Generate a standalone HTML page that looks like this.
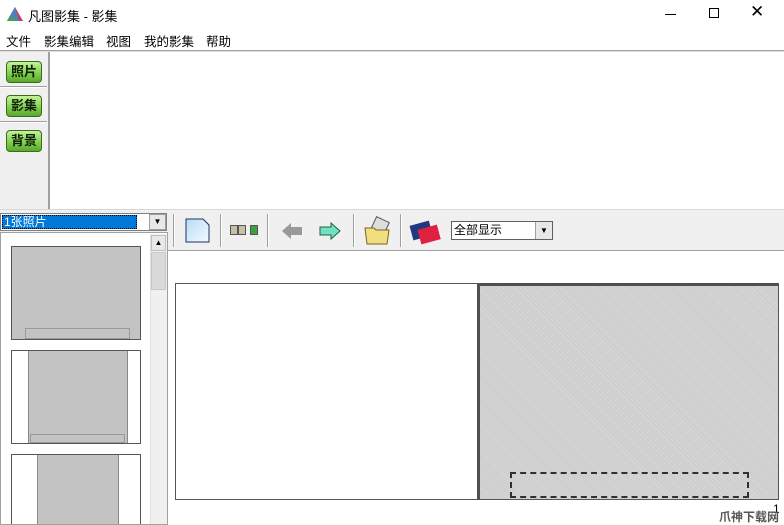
<!DOCTYPE html>
<html style="overflow:hidden;width:784px;height:525px"><head><meta charset="utf-8"><style>
*{margin:0;padding:0;box-sizing:border-box}
body{width:784px;height:525px;overflow:hidden;background:#fff;position:relative;font-family:"Liberation Sans","Noto Sans CJK SC",sans-serif;font-size:12px;color:#000}
.a{position:absolute}
.btn{position:absolute;left:6px;width:36px;height:22px;border:1px solid #3a6a1a;border-radius:4px;background:linear-gradient(#c4f49a,#7ccc4a 60%,#5aa82e);font-weight:bold;font-size:13px;text-align:center;line-height:20px;color:#102008}
.sep{position:absolute;top:214px;width:2px;height:33px;border-left:1px solid #a0a0a0;border-right:1px solid #fff}
.hatch{background-color:#dadada;background-image:repeating-linear-gradient(45deg,#c8c8c8 0 1px,transparent 1px 2px)}
</style></head><body>
<svg class="a" style="left:6px;top:6px" width="18" height="18" viewBox="0 0 18 18"><path d="M9 1 L17 15 L1 15Z" fill="#c04060"/><path d="M9 1 L13 15 L1 15Z" fill="#5080c0"/><path d="M4 10 L13 15 L1 15Z" fill="#40a060"/></svg>
<div class="a" style="left:28px;top:6px;font-size:13px">凡图影集 - 影集</div>
<div class="a" style="left:665px;top:14px;width:11px;height:1px;background:#000"></div>
<div class="a" style="left:709px;top:8px;width:10px;height:10px;border:1px solid #000"></div>
<div class="a" style="left:750px;top:2px;font-size:17px;font-weight:lighter">✕</div>
<div class="a" style="left:6px;top:31px;font-size:12.5px">文件</div>
<div class="a" style="left:44px;top:31px;font-size:12.5px">影集编辑</div>
<div class="a" style="left:106px;top:31px;font-size:12.5px">视图</div>
<div class="a" style="left:144px;top:31px;font-size:12.5px">我的影集</div>
<div class="a" style="left:206px;top:31px;font-size:12.5px">帮助</div>
<div class="a" style="left:0;top:50px;width:784px;height:2px;background:#a0a0a0;border-bottom:1px solid #e0e0e0"></div>
<div class="a" style="left:0;top:52px;width:50px;height:157px;background:#f0f0f0;border-right:2px solid #a0a0a0"></div>
<div class="a" style="left:0;top:86px;width:47px;height:2px;border-top:1px solid #a0a0a0;border-bottom:1px solid #fff"></div>
<div class="a" style="left:0;top:121px;width:47px;height:2px;border-top:1px solid #a0a0a0;border-bottom:1px solid #fff"></div>
<div class="btn" style="top:61px">照片</div>
<div class="btn" style="top:95px">影集</div>
<div class="btn" style="top:130px">背景</div>
<div class="a" style="left:0;top:209px;width:784px;height:42px;background:#f0f0f0;border-top:1px solid #d8d8d8;border-bottom:1px solid #a0a0a0"></div>
<div class="a" style="left:0;top:213px;width:167px;height:18px;background:#fff;border:1px solid #808080"></div>
<div class="a" style="left:2px;top:215px;width:135px;height:14px;background:#0078d7;border:1px dotted #000;color:#fff;line-height:12px;padding-left:1px">1张照片</div>
<div class="a" style="left:149px;top:214px;width:17px;height:16px;background:#e8e8e8;border:1px solid #a0a0a0;font-size:8px;text-align:center;line-height:14px">▼</div>
<div class="sep" style="left:173px"></div>
<div class="sep" style="left:220px"></div>
<div class="sep" style="left:267px"></div>
<div class="sep" style="left:353px"></div>
<div class="sep" style="left:400px"></div>
<svg class="a" style="left:185px;top:218px" width="26" height="26"><defs><linearGradient id="g" x1="0" y1="0" x2="1" y2="1"><stop offset="0" stop-color="#b8dcf6"/><stop offset="1" stop-color="#f4faff"/></linearGradient></defs><path d="M1 1 H18 L24 7 V24 H1Z" fill="url(#g)" stroke="#203060"/></svg>
<div class="a" style="left:230px;top:225px;width:8px;height:10px;background:#c8bfa8;border:1px solid #555"></div>
<div class="a" style="left:238px;top:225px;width:8px;height:10px;background:#c8bfa8;border:1px solid #555"></div>
<div class="a" style="left:250px;top:225px;width:8px;height:10px;background:#40a040;border:1px solid #555"></div>
<svg class="a" style="left:281px;top:222px" width="22" height="18"><path d="M1 9 L10 1 V5 H21 V13 H10 V17Z" fill="#999"/></svg>
<svg class="a" style="left:319px;top:222px" width="22" height="18"><path d="M21 9 L12 1 V5 H1 V13 H12 V17Z" fill="#70e0c0" stroke="#206040"/></svg>
<svg class="a" style="left:363px;top:216px" width="30" height="30"><rect x="10" y="3" width="14" height="14" fill="#ddd" stroke="#555" transform="rotate(25 17 10)"/><path d="M2 12 H11 L13 14 H26 L24 28 H4Z" fill="#f0e080" stroke="#806020"/></svg>
<svg class="a" style="left:409px;top:218px" width="32" height="28"><rect x="2" y="5" width="20" height="15" fill="#203880" transform="rotate(-15 12 12)"/><rect x="10" y="9" width="20" height="15" fill="#e02040" transform="rotate(-15 20 16)"/></svg>
<div class="a" style="left:451px;top:221px;width:102px;height:19px;background:#fff;border:1px solid #606060;line-height:17px;padding-left:2px;font-size:12px">全部显示</div>
<div class="a" style="left:535px;top:222px;width:17px;height:17px;background:#e8e8e8;border-left:1px solid #a0a0a0;font-size:8px;text-align:center;line-height:17px">▼</div>
<div class="a" style="left:0;top:232px;width:168px;height:293px;background:#fff;border:1px solid #a0a0a0;overflow:hidden">
<div class="a" style="left:149px;top:1px;width:17px;height:300px;background:#f0f0f0;border-left:1px solid #e0e0e0"></div>
<div class="a" style="left:150px;top:2px;width:15px;height:16px;background:#e8e8e8;border:1px solid #c0c0c0;font-size:8px;text-align:center;line-height:14px">▲</div>
<div class="a" style="left:150px;top:19px;width:15px;height:38px;background:#dadada;border:1px solid #c8c8c8"></div>
<div class="a" style="left:10px;top:13px;width:130px;height:94px;background:#c3c3c3;border:1px solid #555"></div>
<div class="a" style="left:24px;top:95px;width:105px;height:11px;border:1px solid #999"></div>
<div class="a" style="left:10px;top:117px;width:130px;height:94px;background:#fff;border:1px solid #555"></div>
<div class="a" style="left:27px;top:118px;width:100px;height:92px;background:#c3c3c3;border-left:1px solid #888;border-right:1px solid #888"></div>
<div class="a" style="left:29px;top:201px;width:95px;height:9px;border:1px solid #999"></div>
<div class="a" style="left:10px;top:221px;width:130px;height:80px;background:#fff;border:1px solid #555"></div>
<div class="a" style="left:36px;top:222px;width:82px;height:80px;background:#c3c3c3;border-left:1px solid #888;border-right:1px solid #888"></div>
</div>
<div class="a" style="left:175px;top:283px;width:304px;height:217px;background:#fff;border:1px solid #555"></div>
<div class="a hatch" style="left:477px;top:283px;width:302px;height:217px;border-left:3px solid #505050;border-top:3px solid #505050;border-right:1px solid #555;border-bottom:1px solid #555"></div>
<div class="a" style="left:510px;top:472px;width:239px;height:26px;border:2px dashed #303030"></div>
<div class="a" style="left:773px;top:502px;font-size:12px">1</div>
<div class="a" style="left:719px;top:508px;font-size:12px;color:#555;font-weight:bold">爪神下载网</div>
</body></html>
